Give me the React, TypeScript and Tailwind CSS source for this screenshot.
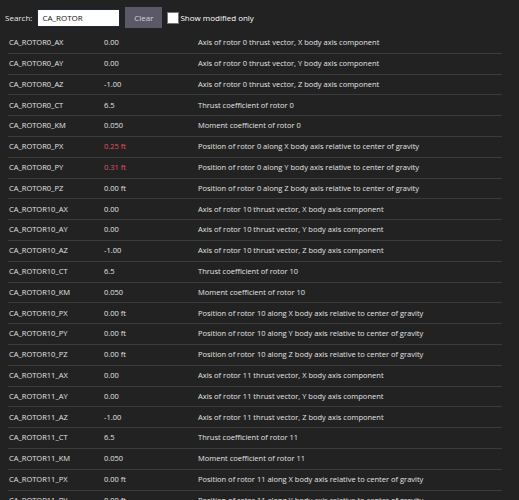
const ROWS: [string, string, string, boolean?][] = [
  ['CA_ROTOR0_AX', '0.00', 'Axis of rotor 0 thrust vector, X body axis component'],
  ['CA_ROTOR0_AY', '0.00', 'Axis of rotor 0 thrust vector, Y body axis component'],
  ['CA_ROTOR0_AZ', '-1.00', 'Axis of rotor 0 thrust vector, Z body axis component'],
  ['CA_ROTOR0_CT', '6.5', 'Thrust coefficient of rotor 0'],
  ['CA_ROTOR0_KM', '0.050', 'Moment coefficient of rotor 0'],
  ['CA_ROTOR0_PX', '0.25 ft', 'Position of rotor 0 along X body axis relative to center of gravity', true],
  ['CA_ROTOR0_PY', '0.31 ft', 'Position of rotor 0 along Y body axis relative to center of gravity', true],
  ['CA_ROTOR0_PZ', '0.00 ft', 'Position of rotor 0 along Z body axis relative to center of gravity'],
  ['CA_ROTOR10_AX', '0.00', 'Axis of rotor 10 thrust vector, X body axis component'],
  ['CA_ROTOR10_AY', '0.00', 'Axis of rotor 10 thrust vector, Y body axis component'],
  ['CA_ROTOR10_AZ', '-1.00', 'Axis of rotor 10 thrust vector, Z body axis component'],
  ['CA_ROTOR10_CT', '6.5', 'Thrust coefficient of rotor 10'],
  ['CA_ROTOR10_KM', '0.050', 'Moment coefficient of rotor 10'],
  ['CA_ROTOR10_PX', '0.00 ft', 'Position of rotor 10 along X body axis relative to center of gravity'],
  ['CA_ROTOR10_PY', '0.00 ft', 'Position of rotor 10 along Y body axis relative to center of gravity'],
  ['CA_ROTOR10_PZ', '0.00 ft', 'Position of rotor 10 along Z body axis relative to center of gravity'],
  ['CA_ROTOR11_AX', '0.00', 'Axis of rotor 11 thrust vector, X body axis component'],
  ['CA_ROTOR11_AY', '0.00', 'Axis of rotor 11 thrust vector, Y body axis component'],
  ['CA_ROTOR11_AZ', '-1.00', 'Axis of rotor 11 thrust vector, Z body axis component'],
  ['CA_ROTOR11_CT', '6.5', 'Thrust coefficient of rotor 11'],
  ['CA_ROTOR11_KM', '0.050', 'Moment coefficient of rotor 11'],
  ['CA_ROTOR11_PX', '0.00 ft', 'Position of rotor 11 along X body axis relative to center of gravity'],
  ['CA_ROTOR11_PY', '0.00 ft', 'Position of rotor 11 along Y body axis relative to center of gravity'],
]

export default function App() {
  return (
    <div className="h-[500px] w-[519px] overflow-hidden bg-[#222222] text-[7.5px] text-[#e2e2e2] font-['Open_Sans',sans-serif]">
      {/* Search bar */}
      <div className="flex h-[33px] items-center pl-[5px] pt-[2px] text-[8px]">
        <span className="text-[#e8e8e8]">Search:</span>
        <div className="ml-[5px] flex h-[18px] w-[83px] items-center border border-[#1c2a3a] bg-white pl-[4px] text-[#111]">
          CA_ROTOR
        </div>
        <button className="ml-[5px] h-[21px] w-[37px] bg-[#5b5868] text-[#d4d4d8]">Clear</button>
        <span className="ml-[5px] h-[12px] w-[12px] border border-[#777] bg-white" />
        <span className="ml-[1px] text-white">Show modified only</span>
      </div>

      {/* Parameter table */}
      <div className="ml-[8px] w-[494px]">
        {ROWS.map(([name, value, desc, modified]) => (
          <div
            key={name}
            className="grid h-[20.8px] grid-cols-[95px_94px_1fr] items-center border-b border-[#3c3c3c] pl-[1px]"
          >
            <span>{name}</span>
            <span className={modified ? 'text-[#e3506a]' : ''}>{value}</span>
            <span>{desc}</span>
          </div>
        ))}
      </div>
    </div>
  )
}
